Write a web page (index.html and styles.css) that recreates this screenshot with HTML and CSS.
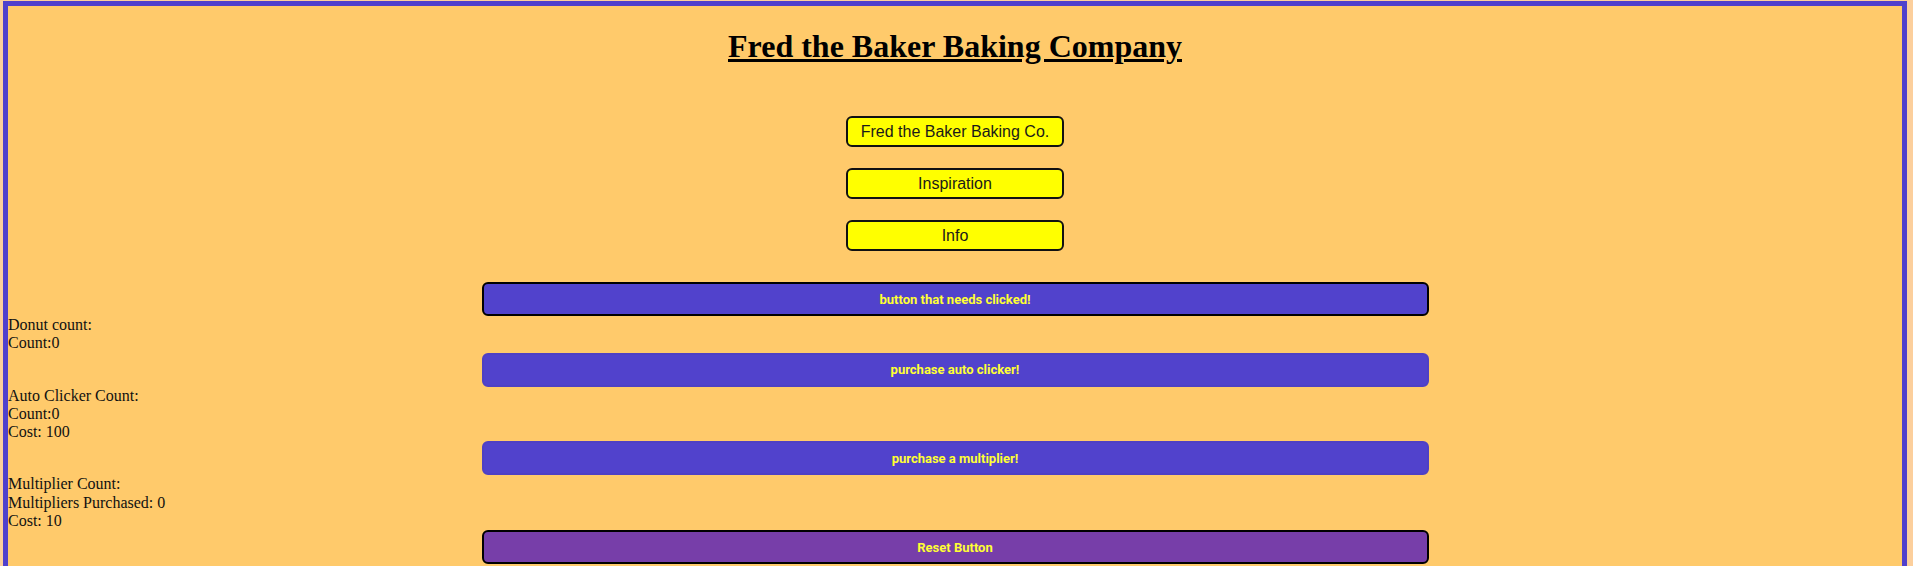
FILE: index.html
```html
<!DOCTYPE html>
<html lang="en">
<head>
<meta charset="utf-8">
<title>Fred the Baker Baking Company</title>
<link rel="stylesheet" href="styles.css">
</head>
<body>
<h1 class="title">Fred the Baker Baking Company</h1>
<nav class="nav">
  <button class="nav-btn">Fred the Baker Baking Co.</button>
  <button class="nav-btn">Inspiration</button>
  <button class="nav-btn">Info</button>
</nav>
<main class="game">
  <button class="action action-main">button that needs clicked!</button>
  <div class="stats">
    <div>Donut count:</div>
    <div>Count:0</div>
  </div>
  <button class="action">purchase auto clicker!</button>
  <div class="stats">
    <div>Auto Clicker Count:</div>
    <div>Count:0</div>
    <div>Cost: 100</div>
  </div>
  <button class="action">purchase a multiplier!</button>
  <div class="stats">
    <div>Multiplier Count:</div>
    <div>Multipliers Purchased: 0</div>
    <div>Cost: 10</div>
  </div>
  <button class="action action-reset">Reset Button</button>
</main>
</body>
</html>
```
FILE: styles.css
```css
html {
  background: #fccf9c;
}

body {
  margin: 1px 6px 0 3px;
  border: 5px solid #5040cc;
  background: #ffca6b;
  font-family: "Liberation Serif", "Times New Roman", serif;
  font-size: 16px;
  color: #111;
  min-height: 600px;
}

.title {
  margin: 22px 0 21px;
  text-align: center;
  font-size: 32px;
  font-weight: bold;
  text-decoration: underline;
  color: #000;
}

.nav {
  display: flex;
  flex-direction: column;
  align-items: center;
  gap: 21px;
  padding: 30px 0 31px;
}

.nav-btn {
  width: 218px;
  height: 31px;
  box-sizing: border-box;
  background: #ffff00;
  border: 2px solid #111;
  border-radius: 6px;
  font-family: "Liberation Sans", Arial, sans-serif;
  font-size: 16px;
  color: #1a1a1a;
  padding: 0;
}

.game {
  display: flex;
  flex-direction: column;
}

.action {
  display: block;
  width: 50%;
  margin: 0 auto;
  height: 34px;
  box-sizing: border-box;
  background: #5142cc;
  border: 2px solid #4f40c4;
  border-radius: 6px;
  font-family: Roboto, "Liberation Sans", Arial, sans-serif;
  font-weight: bold;
  font-size: 13px;
  color: #ffff33;
  padding: 0;
}

.action-main {
  border-color: #000;
}

.action-reset {
  background: #773ea9;
  border-color: #000;
}

.stats {
  line-height: 18.3px;
}
```
